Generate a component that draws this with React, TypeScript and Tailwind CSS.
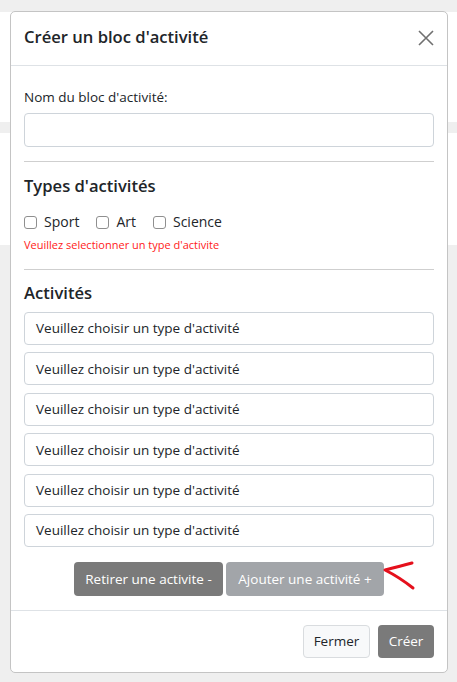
import type { ReactNode } from "react";

const font = { fontFamily: '"Open Sans", "Noto Sans", sans-serif' };

function Check({ label }: { label: string }) {
  return (
    <label className="flex items-center gap-[7px]">
      <span className="block h-[13px] w-[13px] rounded-[3px] border border-[#8f8f8f] bg-white" />
      <span>{label}</span>
    </label>
  );
}

function Rule() {
  return <div className="h-px bg-[#cfcfcf]" />;
}

function Btn({ children, className }: { children: ReactNode; className: string }) {
  return (
    <button type="button" className={`flex items-center justify-center rounded-[4px] text-[13.5px] ${className}`}>
      {children}
    </button>
  );
}

export default function App() {
  const rows = Array.from({ length: 6 });
  return (
    <div className="relative h-[682px] w-[457px] overflow-hidden bg-[#efefef] text-[#212529]" style={font}>
      {/* page content behind the modal */}
      <div className="pt-[12px]">
        <div className="h-[110px] bg-white" />
        <div className="mt-[11px] h-[112px] bg-white" />
      </div>

      {/* modal */}
      <div className="absolute left-[10px] top-[11px] flex h-[662px] w-[438px] flex-col rounded-[5px] border border-[#c4c4c4] bg-white">
        <div className="flex h-[54px] items-center justify-between border-b border-[#dee2e6] pl-[13px] pr-[13px]">
          <h5 className="mt-[-2px] text-[16.6px] font-semibold leading-none">Créer un bloc d'activité</h5>
          <svg width="16" height="16" viewBox="0 0 16 16" className="mt-[-1px]">
            <path d="M1 1 L15 15 M15 1 L1 15" stroke="#707070" strokeWidth="1.6" fill="none" />
          </svg>
        </div>

        <div className="flex flex-1 flex-col px-[13px] pt-[21px]">
          <div className="h-[20px] text-[13.5px] leading-[20px]">Nom du bloc d'activité:</div>
          <div className="mt-[6px] h-[34px] rounded-[4px] border border-[#ced4da]" />

          <div className="mt-[14px]">
            <Rule />
          </div>

          <h4 className="mt-[12px] text-[16.6px] font-semibold leading-[24px]">Types d'activités</h4>
          <div className="mt-[14px] flex h-[20px] items-center gap-[17px] text-[14px] leading-[20px]">
            <Check label="Sport" />
            <Check label="Art" />
            <Check label="Science" />
          </div>
          <div className="mt-[5px] h-[16px] text-[11px] leading-[16px] text-[#ff1a1a]">
            Veuillez selectionner un type d'activite
          </div>

          <div className="mt-[16px]">
            <Rule />
          </div>

          <h4 className="mt-[11px] text-[16.6px] font-semibold leading-[24px]">Activités</h4>
          <div className="mt-[7px] flex flex-col gap-[7.4px]">
            {rows.map((_, i) => (
              <div
                key={i}
                className="flex h-[33px] items-center rounded-[4px] border border-[#ced4da] px-[11px] text-[13.5px]"
              >
                Veuillez choisir un type d'activité
              </div>
            ))}
          </div>

          <div className="relative mt-[15px] flex justify-center gap-[3px]">
            <Btn className="h-[34px] w-[149px] bg-[#7a7a7a] text-white">Retirer une activite -</Btn>
            <Btn className="h-[34px] w-[158px] bg-[#a2a5a9] text-white">Ajouter une activité +</Btn>
            <svg
              width="36"
              height="32"
              viewBox="0 0 36 32"
              className="absolute left-[358px] top-[-2px]"
            >
              <path
                d="M30 3 Q 19 6 3 10 Q 17 17 31 28"
                stroke="#e5101c"
                strokeWidth="3"
                strokeLinecap="round"
                strokeLinejoin="round"
                fill="none"
              />
            </svg>
          </div>
        </div>

        <div className="flex h-[62px] items-start justify-end gap-[8px] border-t border-[#dee2e6] px-[13px] pt-[14px]">
          <Btn className="h-[33px] w-[67px] border border-[#d9dcdf] bg-[#f8f9fa] text-[#212529]">Fermer</Btn>
          <Btn className="h-[33px] w-[56px] bg-[#7a7a7a] text-white">Créer</Btn>
        </div>
      </div>
    </div>
  );
}
